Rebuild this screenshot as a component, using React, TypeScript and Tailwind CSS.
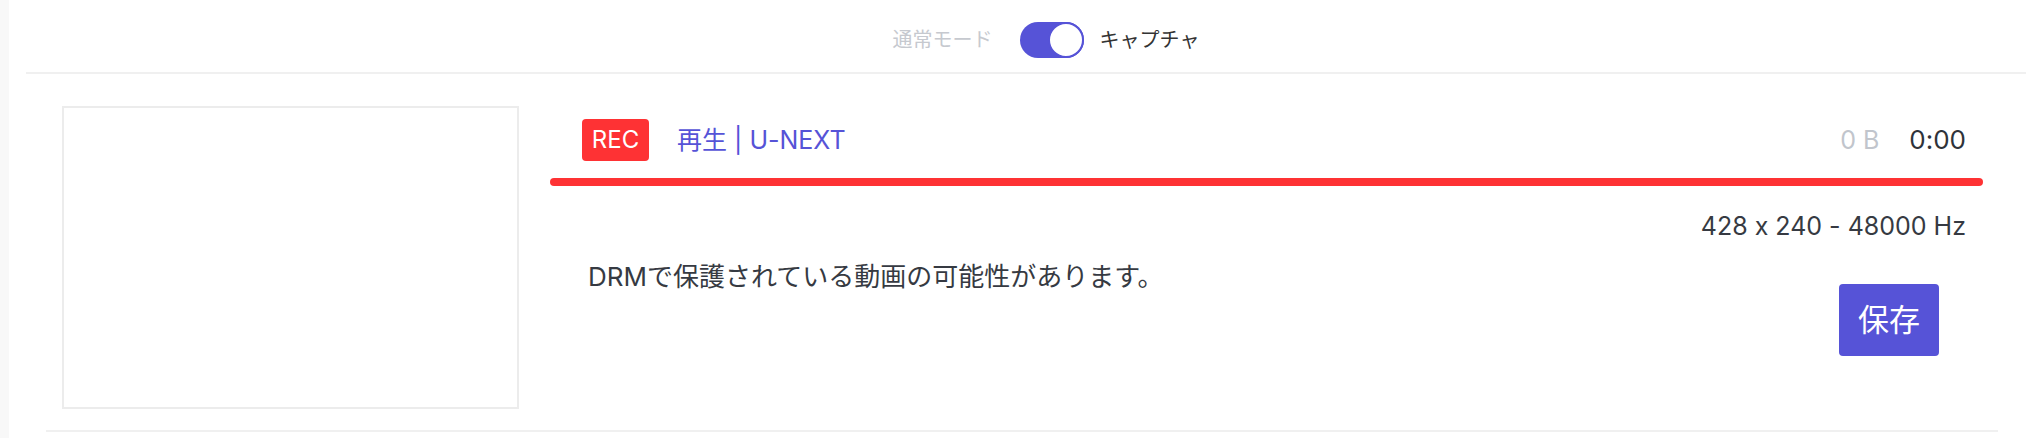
import React, { useState } from 'react';

const FONT = "font-['Inter','Noto_Sans_CJK_JP',sans-serif] [font-feature-settings:'calt'_0]";

const ModeSwitch: React.FC = () => {
  const [capture, setCapture] = useState(true);
  return (
    <div className="flex items-center">
      <span className={`text-[20px] leading-none ${capture ? 'text-[#c6c9cf]' : 'text-[#333]'}`}>通常モード</span>
      <button
        onClick={() => setCapture(!capture)}
        className={`ml-[27px] flex h-[36px] w-[64px] items-center rounded-full p-0 ${capture ? 'justify-end bg-[#5653d7]' : 'justify-start bg-[#d1d5db]'}`}
      >
        <span className="h-[36px] w-[36px] rounded-full border-[2px] border-[#5653d7] bg-white"></span>
      </button>
      <span className={`ml-[16px] text-[20px] leading-none ${capture ? 'text-[#333]' : 'text-[#c6c9cf]'}`}>キャプチャ</span>
    </div>
  );
};

export default function App() {
  return (
    <div className={`flex h-[438px] bg-white ${FONT}`}>
      {/* left edge */}
      <div className="w-[9px] shrink-0 bg-[#f8f8f8]"></div>

      <div className="flex flex-1 flex-col">
        {/* header */}
        <div className="ml-[17px] flex h-[74px] items-center justify-center border-b-2 border-[#f0f0f0] pl-[40px] pt-[8px]">
          <ModeSwitch />
        </div>

        {/* recording row */}
        <div className="ml-[37px] mr-[28px] flex border-b-2 border-[#f0f0f0] pb-[21px] pl-[16px] pr-[15px] pt-[32px]">
          <div className="h-[303px] w-[457px] shrink-0 border-2 border-[#ececec] bg-white"></div>

          <div className="ml-[31px] flex flex-1 flex-col">
            <div className="flex items-center pl-[32px] pr-[17px] pt-[13px]">
              <span className="flex h-[42px] w-[67px] items-center justify-center rounded-[4px] bg-[#fe3234] text-[24px] leading-none text-white">REC</span>
              <span className="ml-[28px] text-[25px] leading-none text-[#5653d7]">再生 | U-NEXT</span>
              <span className="ml-auto text-[25px] leading-none text-[#c1c5cc]">0 B</span>
              <span className="ml-[30px] text-[26px] leading-none text-[#2f333a]">0:00</span>
            </div>

            <div className="mt-[17px] h-[8px] w-full rounded-full bg-[#fe3234]"></div>

            <div className="mt-[22px] pr-[17px] text-right text-[25px] leading-[36px] text-[#363a42]">428 x 240 - 48000 Hz</div>

            <div className="mt-[15px] flex items-start pl-[38px] pr-[44px]">
              <p className="text-[26px] leading-[36px] text-[#363a42]">DRMで保護されている動画の可能性があります。</p>
              <button className="ml-auto mt-[25px] flex h-[72px] w-[100px] items-center justify-center rounded-[4px] bg-[#5653d7] text-[31px] text-white">保存</button>
            </div>
          </div>
        </div>
      </div>
    </div>
  );
}
